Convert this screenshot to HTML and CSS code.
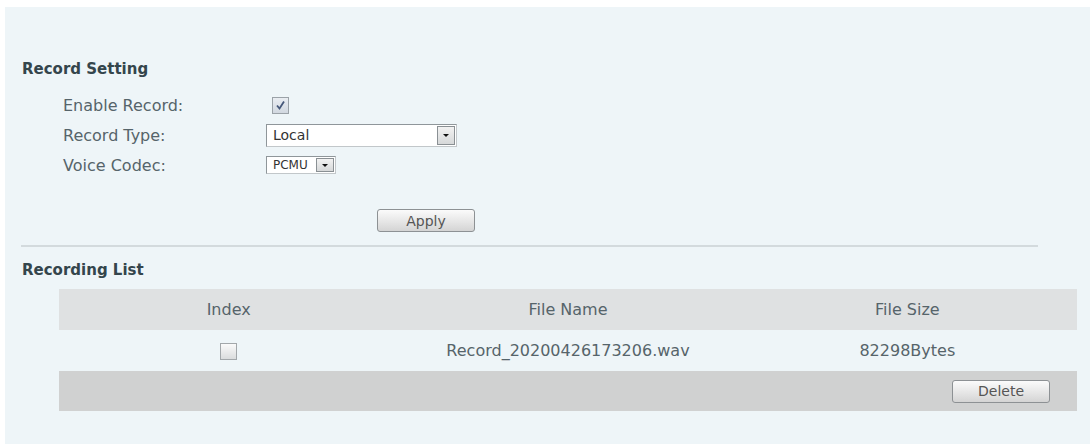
FILE: index.html
```html
<!DOCTYPE html>
<html lang="en">
<head>
    <meta charset="UTF-8">
    <title>Record Setting</title>
    <link rel="stylesheet" href="styles.css">
</head>
<body>
    <div class="panel">
        <h2 class="section-title">Record Setting</h2>
        <div class="form-row">
            <span class="label">Enable Record:</span>
            <span class="check checked">
                <svg width="11" height="11" viewBox="0 0 11 11"><path d="M2 5.5 L4.5 8.5 L9 1.5" fill="none" stroke="#46587a" stroke-width="1.8"/></svg>
            </span>
        </div>
        <div class="form-row">
            <span class="label">Record Type:</span>
            <div class="select select-wide">
                <span class="select-text">Local</span>
                <span class="select-arrow"></span>
            </div>
        </div>
        <div class="form-row">
            <span class="label">Voice Codec:</span>
            <div class="select select-small">
                <span class="select-text">PCMU</span>
                <span class="select-arrow"></span>
            </div>
        </div>
        <div class="apply-row">
            <button class="btn btn-apply">Apply</button>
        </div>
        <hr class="divider">

        <h2 class="section-title">Recording List</h2>
        <table class="rec-table">
            <thead>
                <tr>
                    <th>Index</th>
                    <th>File Name</th>
                    <th>File Size</th>
                </tr>
            </thead>
            <tbody>
                <tr class="data-row">
                    <td><span class="check"></span></td>
                    <td>Record_20200426173206.wav</td>
                    <td>82298Bytes</td>
                </tr>
                <tr class="foot-row">
                    <td colspan="3"><button class="btn btn-delete">Delete</button></td>
                </tr>
            </tbody>
        </table>
    </div>
</body>
</html>
```

FILE: styles.css
```css
body {
    margin: 0;
    background-color: #fff;
    font-family: "DejaVu Sans", Verdana, sans-serif;
    color: #56646a;
}
.panel {
    margin: 7px 0 0 5px;
    height: 437px;
    padding: 53px 0 0 0;
    box-sizing: border-box;
    background-color: #eef5f8;
}
.section-title {
    margin: 0 0 0 17px;
    font-size: 15px;
    line-height: 18px;
    font-weight: bold;
    color: #34454c;
}
.form-row {
    display: flex;
    align-items: center;
    height: 30px;
    padding-left: 58px;
}
.form-row:first-of-type {
    margin-top: 12px;
}
.label {
    width: 203px;
    font-size: 16px;
}
.check {
    display: inline-flex;
    align-items: center;
    justify-content: center;
    width: 15px;
    height: 15px;
    border: 1px solid #a2a7aa;
    background: linear-gradient(#fafafa, #dadcdd);
}
.check.checked {
    margin-left: 6px;
    background: linear-gradient(#e9edf2, #d2d8e0);
    border-color: #9ba2a8;
}
.select {
    display: flex;
    align-items: center;
    justify-content: space-between;
    box-sizing: border-box;
    background-color: #fff;
    border: 1px solid #8f969a;
    border-right-color: #c2c7ca;
    border-bottom-color: #c2c7ca;
    color: #333;
}
.select-wide {
    width: 191px;
    height: 23px;
    font-size: 14px;
    padding-left: 6px;
}
.select-small {
    width: 70px;
    height: 18px;
    font-size: 12px;
    padding-left: 6px;
}
.select-arrow {
    position: relative;
    box-sizing: border-box;
    width: 18px;
    height: 19px;
    margin-right: 1px;
    border: 1px solid #8a9094;
    background: linear-gradient(#f2f2f2, #d6d8d9);
}
.select-small .select-arrow {
    width: 18px;
    height: 14px;
}
.select-arrow::after {
    content: "";
    position: absolute;
    left: 5px;
    top: 7px;
    border-left: 3px solid transparent;
    border-right: 3px solid transparent;
    border-top: 3px solid #111;
}
.select-small .select-arrow::after {
    top: 5px;
}
.apply-row {
    padding: 29px 0 0 372px;
}
.btn {
    font-family: "DejaVu Sans", Verdana, sans-serif;
    font-size: 14px;
    color: #555;
    border: 1px solid #8d9194;
    border-radius: 3px;
    background: linear-gradient(#fbfbfb, #e4e4e4 60%, #d4d4d4);
    padding: 0;
    cursor: pointer;
}
.btn-apply {
    display: block;
    width: 98px;
    height: 23px;
}
.divider {
    margin: 13px 0 14px 16px;
    width: 1017px;
    height: 2px;
    border: none;
    background-color: #d3dadd;
}
.rec-table {
    margin: 10px 0 0 54px;
    width: 1018px;
    border-collapse: collapse;
    table-layout: fixed;
    font-size: 16px;
}
.rec-table th {
    height: 41px;
    padding: 0;
    font-weight: normal;
    background-color: #dfe1e2;
    color: #56646a;
}
.data-row td {
    height: 41px;
    padding: 0;
    text-align: center;
    vertical-align: middle;
}
.data-row .check {
    vertical-align: middle;
}
.foot-row td {
    height: 40px;
    padding: 0 27px 0 0;
    text-align: right;
    background-color: #d0d1d1;
}
.btn-delete {
    width: 98px;
    height: 23px;
    vertical-align: middle;
}
```
